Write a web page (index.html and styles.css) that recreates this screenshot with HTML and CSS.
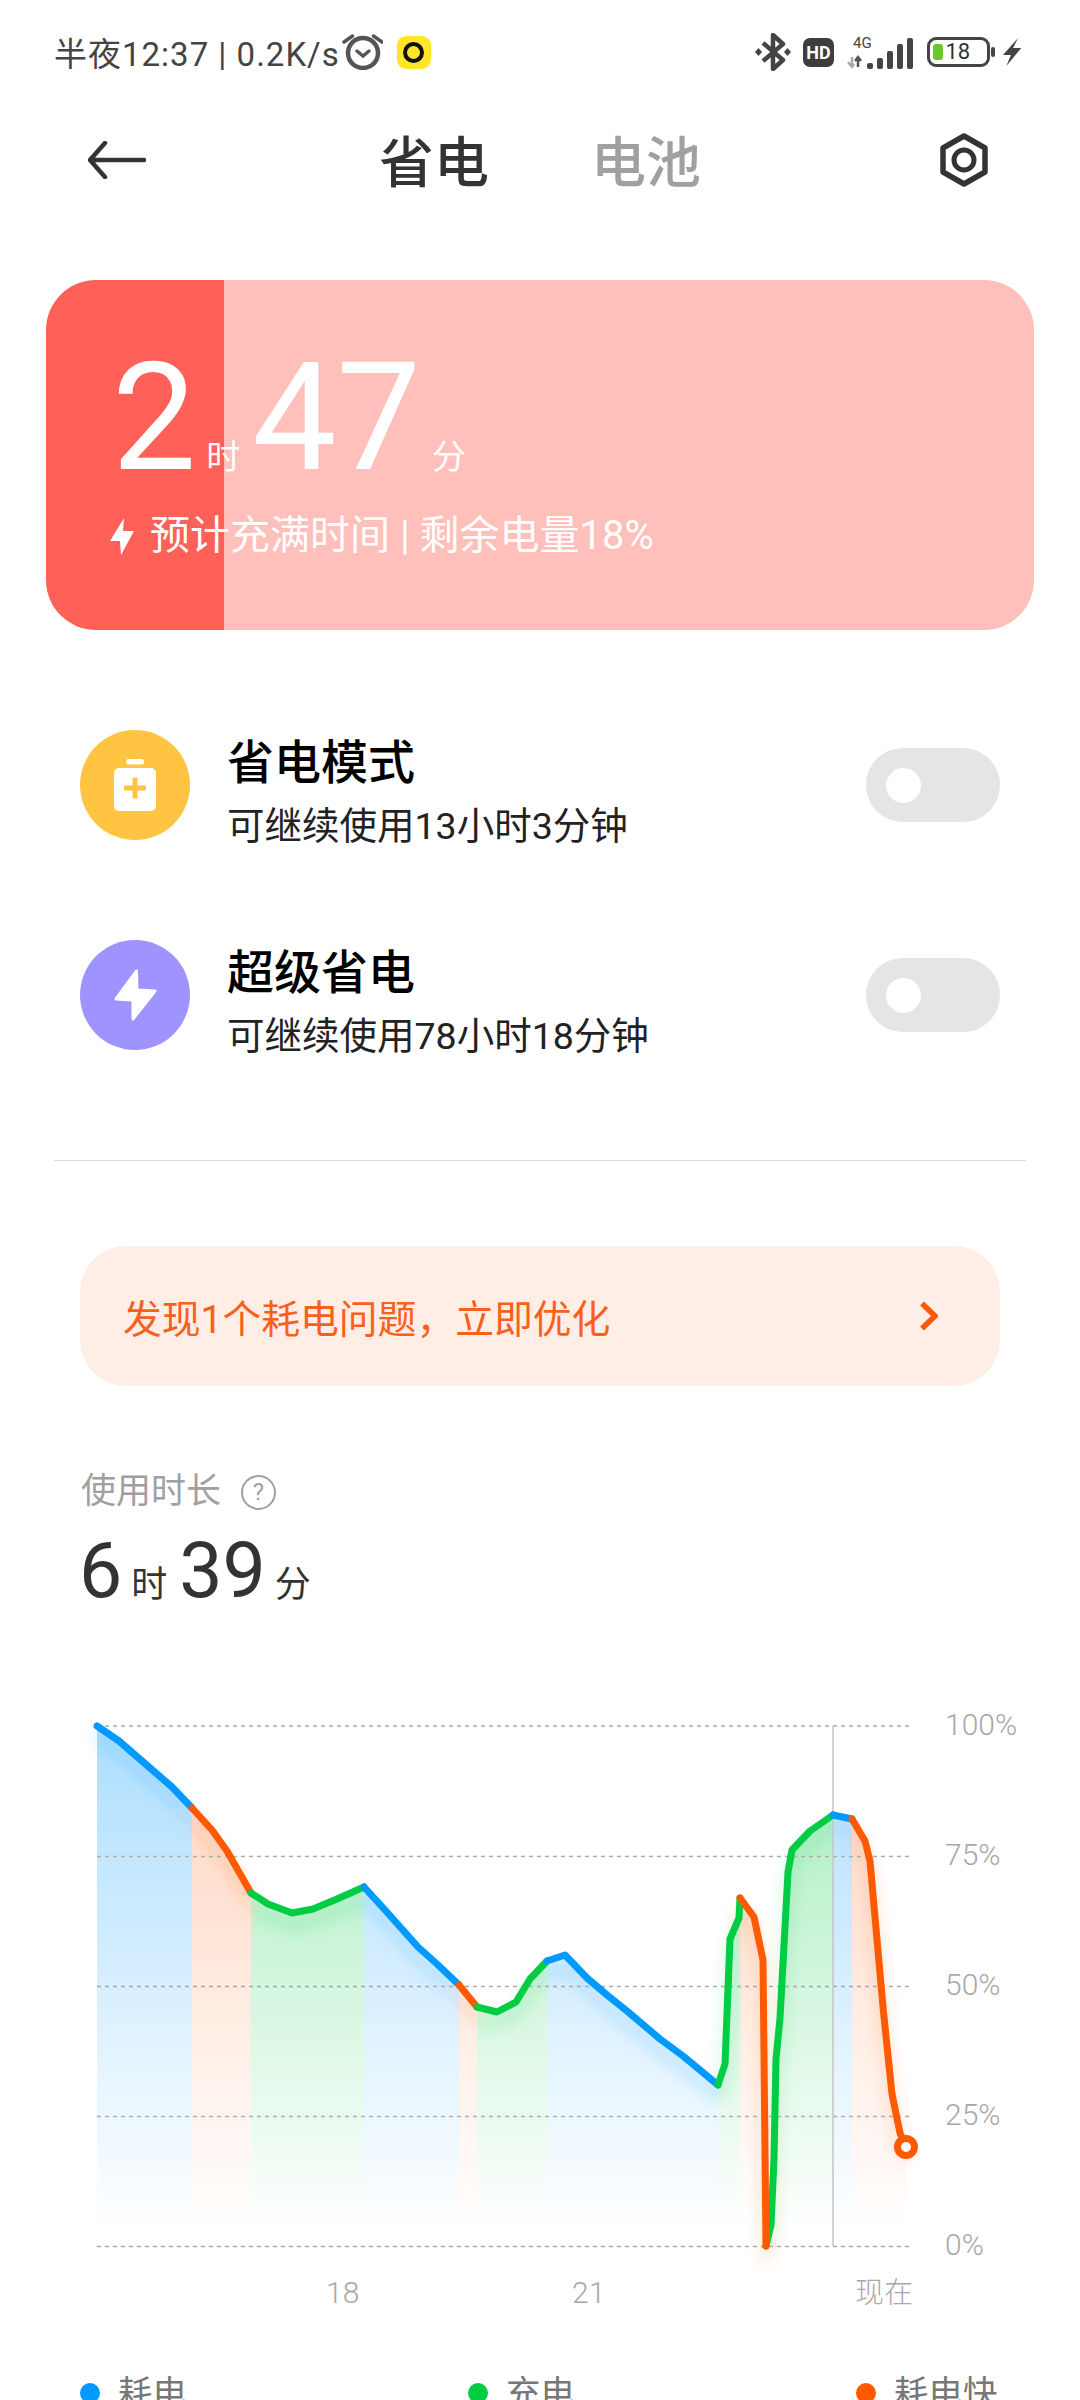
FILE: index.html
```html
<!DOCTYPE html>
<html lang="zh-CN">
<head>
  <meta charset="UTF-8">
  <meta name="viewport" content="width=device-width, initial-scale=1.0">
  <title>省电</title>
  <link rel="stylesheet" href="styles.css">
</head>
<body>

<!-- status bar -->
<div class="status">
  <span class="status-text">半夜12:37 | 0.2K/s</span>
  <svg class="alarm" viewBox="0 0 41 36" width="41" height="36">
    <circle cx="21" cy="19" r="15" fill="none" stroke="#555" stroke-width="4.5"/>
    <path d="M15 17l6 5 6-5" fill="none" stroke="#555" stroke-width="3.5" stroke-linecap="round"/>
    <path d="M2 8L10.5 2M40 8L31.5 2" fill="none" stroke="#555" stroke-width="3.5" stroke-linecap="round"/>
  </svg>
  <span class="app-tile"><span class="app-ring"></span></span>
  <div class="status-right">
    <svg viewBox="0 0 36 38" width="36" height="38">
      <path d="M8 10l20 17-10 9V2l10 9L8 28" fill="none" stroke="#444" stroke-width="4.5" stroke-linejoin="round"/>
      <path d="M3.5 15L7 19l-3.5 4L0 19zM32.5 15l3.5 4-3.5 4-3.5-4z" fill="#444"/>
    </svg>
    <span class="hd">HD</span>
    <svg viewBox="0 0 66 35" width="66" height="35">
      <text class="net" x="6" y="13">4G</text>
      <path d="M5 22v10M1 27l4 5 2-3" fill="none" stroke="#aaa" stroke-width="2.5"/>
      <path d="M11 32V22M8 26l3-4 3 4" fill="none" stroke="#555" stroke-width="2.5"/>
      <rect x="20" y="28" width="6" height="6" rx="2" fill="#444"/>
      <rect x="30" y="23" width="6" height="11" rx="2" fill="#444"/>
      <rect x="40" y="16" width="6" height="18" rx="2" fill="#444"/>
      <rect x="50" y="9" width="6" height="25" rx="2" fill="#444"/>
      <rect x="60" y="3" width="6" height="31" rx="2" fill="#444"/>
    </svg>
    <div class="battery">
      <div class="battery-body">
        <span class="battery-level"></span>
        <span class="battery-num">18</span>
      </div>
      <span class="battery-tip"></span>
    </div>
    <svg class="status-bolt" viewBox="0 0 19 28" width="19" height="28">
      <path d="M15 0L0 17h8L3.3 28 18.3 10H10z" fill="#444"/>
    </svg>
  </div>
</div>

<!-- nav -->
<div class="nav">
  <svg viewBox="0 0 58 38" width="58" height="38">
    <path d="M17 2L2 19l15 17M2 19h54" fill="none" stroke="#333" stroke-width="4.5" stroke-linecap="round" stroke-linejoin="round"/>
  </svg>
  <div class="tabs">
    <span class="tab tab-active">省电</span>
    <span class="tab">电池</span>
  </div>
  <svg viewBox="0 0 52 54" width="52" height="54">
    <path d="M26 3l21 12v24L26 51 5 39V15z" fill="none" stroke="#333" stroke-width="5.5" stroke-linejoin="round"/>
    <circle cx="26" cy="27" r="10" fill="none" stroke="#333" stroke-width="5"/>
  </svg>
</div>

<!-- charge card -->
<div class="card">
  <div class="card-time">
    <span class="card-num">2</span><span class="card-unit">时</span>
    <span class="card-num">47</span><span class="card-unit card-unit-last">分</span>
  </div>
  <div class="card-info">
    <svg viewBox="0 0 24 37" width="24" height="37">
      <path d="M14 0L0 23h10L11 37 24 13H13z" fill="#fff"/>
    </svg>
    <span>预计充满时间 | 剩余电量18%</span>
  </div>
</div>

<!-- modes -->
<div class="mode">
  <span class="mode-icon mode-icon-yellow">
    <svg viewBox="0 0 42 52" width="42" height="52">
      <rect x="12" y="0" width="18" height="5.5" rx="2.75" fill="#fff"/>
      <rect x="0" y="9" width="42" height="43" rx="5" fill="#fff"/>
      <path d="M21 18.5v21M10 29h22" stroke="#ffc542" stroke-width="5"/>
    </svg>
  </span>
  <div class="mode-text">
    <div class="mode-title">省电模式</div>
    <div class="mode-sub">可继续使用13小时3分钟</div>
  </div>
  <span class="toggle"><span class="knob"></span></span>
</div>
<div class="mode">
  <span class="mode-icon mode-icon-purple">
    <svg viewBox="0 0 43 52" width="43" height="52">
      <path d="M22.5 2L2 30l17 1v19L41 22l-18-1z" fill="#fff" stroke="#fff" stroke-width="3" stroke-linejoin="round"/>
    </svg>
  </span>
  <div class="mode-text">
    <div class="mode-title">超级省电</div>
    <div class="mode-sub">可继续使用78小时18分钟</div>
  </div>
  <span class="toggle"><span class="knob"></span></span>
</div>

<hr class="divider">

<!-- alert -->
<div class="alert">
  <span>发现1个耗电问题，立即优化</span>
  <svg viewBox="0 0 19 30" width="19" height="30">
    <path d="M3 2.5L16 15 3 27.5" fill="none" stroke="#fb5a0a" stroke-width="5.5"/>
  </svg>
</div>

<!-- usage -->
<div class="usage">
  <div class="usage-label">
    <span>使用时长</span>
    <span class="help">?</span>
  </div>
  <div class="usage-time">
    <span class="usage-num">6</span><span class="usage-unit">时</span>
    <span class="usage-num">39</span><span class="usage-unit">分</span>
  </div>
</div>

<!-- chart, coordinates are page pixels -->
<svg class="chart" viewBox="0 1700 1080 640" width="1080" height="640">
  <defs>
    <linearGradient id="fade-blue" gradientUnits="userSpaceOnUse" x1="0" y1="1726" x2="0" y2="2232">
      <stop offset="0" stop-color="#0099ff" stop-opacity=".32"/>
      <stop offset="1" stop-color="#0099ff" stop-opacity="0"/>
    </linearGradient>
    <linearGradient id="fade-green" gradientUnits="userSpaceOnUse" x1="0" y1="1726" x2="0" y2="2232">
      <stop offset="0" stop-color="#00cc44" stop-opacity=".36"/>
      <stop offset="1" stop-color="#00cc44" stop-opacity="0"/>
    </linearGradient>
    <linearGradient id="fade-orange" gradientUnits="userSpaceOnUse" x1="0" y1="1726" x2="0" y2="2232">
      <stop offset="0" stop-color="#ff5a00" stop-opacity=".26"/>
      <stop offset="1" stop-color="#ff5a00" stop-opacity="0"/>
    </linearGradient>
    <filter id="soft" filterUnits="userSpaceOnUse" x="0" y="1700" width="1080" height="640">
      <feGaussianBlur stdDeviation="8"/>
    </filter>
    <g id="lines">
      <polyline class="line line-blue" points="97,1726 119,1741 142,1761 172,1787 192,1808"/>
      <polyline class="line line-orange" points="192,1808 212,1830 227,1851 251,1893"/>
      <polyline class="line line-green" points="251,1893 268,1904 292,1913 313,1909 337,1899 364,1887"/>
      <polyline class="line line-blue" points="364,1887 385,1910 418,1947 437,1964 459,1985"/>
      <polyline class="line line-orange" points="459,1985 477,2007"/>
      <polyline class="line line-green" points="477,2007 497,2012 516,2002 530,1979 547,1961"/>
      <polyline class="line line-blue" points="547,1961 565,1955 587,1978 607,1995 627,2011 660,2039 683,2056 718,2085"/>
      <polyline class="line line-green" points="718,2085 725,2064 730,1939 739,1918 740,1898"/>
      <polyline class="line line-green" points="766,2246 771,2225 774,2159 776,2059 780,2018 788,1872 792,1850 810,1831 833,1815"/>
      <polyline class="line line-orange" points="740,1898 754,1917 763,1960 766,2246"/>
      <polyline class="line line-blue" points="833,1815 852,1819"/>
      <polyline class="line line-orange" points="852,1819 865,1841 870,1861 883,2007 892,2094 900,2133 906,2147"/>
    </g>
  </defs>

  <polygon fill="url(#fade-blue)" points="97,1726 119,1741 142,1761 172,1787 192,1808 192,2246 97,2246"/>
  <polygon fill="url(#fade-orange)" points="192,1808 212,1830 227,1851 251,1893 251,2246 192,2246"/>
  <polygon fill="url(#fade-green)" points="251,1893 268,1904 292,1913 313,1909 337,1899 364,1887 364,2246 251,2246"/>
  <polygon fill="url(#fade-blue)" points="364,1887 385,1910 418,1947 437,1964 459,1985 459,2246 364,2246"/>
  <polygon fill="url(#fade-orange)" points="459,1985 477,2007 477,2246 459,2246"/>
  <polygon fill="url(#fade-green)" points="477,2007 497,2012 516,2002 530,1979 547,1961 547,2246 477,2246"/>
  <polygon fill="url(#fade-blue)" points="547,1961 565,1955 587,1978 607,1995 627,2011 660,2039 683,2056 718,2085 718,2246 547,2246"/>
  <polygon fill="url(#fade-green)" points="718,2085 725,2064 730,1939 739,1918 740,1898 740,2246 718,2246"/>
  <polygon fill="url(#fade-orange)" points="740,1898 754,1917 763,1960 766,2246 740,2246"/>
  <polygon fill="url(#fade-green)" points="766,2246 771,2225 774,2159 776,2059 780,2018 788,1872 792,1850 810,1831 833,1815 833,2246"/>
  <polygon fill="url(#fade-blue)" points="833,1815 852,1819 852,2246 833,2246"/>
  <polygon fill="url(#fade-orange)" points="852,1819 865,1841 870,1861 883,2007 892,2094 900,2133 906,2147 906,2246 852,2246"/>

  <use class="glow" href="#lines" transform="translate(0 12)" filter="url(#soft)"/>

  <path class="grid" d="M97 1726H913M97 1856.5H913M97 1986.5H913M97 2116.5H913M97 2246.5H913"/>
  <path class="now" d="M833 1726V2246"/>

  <use href="#lines"/>
  <circle class="dot-end" cx="906" cy="2147" r="8.5"/>

  <text class="axis" x="945" y="1735">100%</text>
  <text class="axis" x="945" y="1865">75%</text>
  <text class="axis" x="945" y="1995">50%</text>
  <text class="axis" x="945" y="2125">25%</text>
  <text class="axis" x="945" y="2255">0%</text>
  <text class="axis" x="326" y="2303">18</text>
  <text class="axis" x="572" y="2303">21</text>
  <text class="axis axis-cn" x="855" y="2303">现在</text>
</svg>

<div class="legend">
  <span class="legend-item"><span class="legend-dot dot-blue"></span>耗电</span>
  <span class="legend-item"><span class="legend-dot dot-green"></span>充电</span>
  <span class="legend-item"><span class="legend-dot dot-orange"></span>耗电快</span>
</div>

</body>
</html>
```

FILE: styles.css
```css
* {
  margin: 0;
  padding: 0;
  box-sizing: border-box;
}
html, body {
  width: 1080px;
  height: 2400px;
  overflow: hidden;
}
body {
  font-family: Roboto, "Noto Sans CJK SC", sans-serif;
  background: #fff;
  color: #000;
}
svg {
  display: block;
  flex: none;
}

/* status bar */
.status {
  display: flex;
  align-items: center;
  height: 104px;
  padding: 0 58px 0 54px;
}
.status-text {
  font-size: 33px;
  letter-spacing: 1px;
  color: #444;
  white-space: nowrap;
}
.alarm {
  margin-left: 2px;
}
.app-tile {
  display: flex;
  align-items: center;
  justify-content: center;
  width: 34px;
  height: 33px;
  margin-left: 14px;
  border-radius: 9px;
  background: #ffe628;
}
.app-ring {
  width: 21px;
  height: 21px;
  border: 4px solid #111;
  border-radius: 50%;
}
.status-right {
  display: flex;
  align-items: center;
  gap: 13px;
  margin-left: auto;
}
.hd {
  width: 31px;
  height: 29px;
  margin-left: -1px;
  border-radius: 7px;
  background: #3d3d3d;
  color: #fff;
  font-size: 18px;
  font-weight: 700;
  line-height: 29px;
  text-align: center;
}
.net {
  font-family: Roboto, sans-serif;
  font-size: 15px;
  fill: #444;
}
.battery {
  display: flex;
  align-items: center;
  gap: 1px;
  margin-left: 1px;
}
.battery-body {
  display: flex;
  align-items: center;
  gap: 3px;
  width: 63px;
  height: 30px;
  padding-left: 2.5px;
  border: 3.5px solid #444;
  border-radius: 9px;
}
.battery-level {
  width: 10px;
  height: 16px;
  border-radius: 3px;
  background: #6cc72c;
}
.battery-num {
  font-size: 22px;
  line-height: 1;
  color: #333;
}
.battery-tip {
  width: 4px;
  height: 10px;
  border-radius: 2px;
  background: #444;
}
.status-bolt {
  margin-left: -5px;
}

/* nav */
.nav {
  display: flex;
  align-items: center;
  justify-content: space-between;
  height: 112px;
  padding: 0 90px 0 88px;
}
.tabs {
  display: flex;
  gap: 102px;
  margin: 6px 4px 0 0;
}
.tab {
  font-size: 55px;
  font-weight: 500;
  line-height: 60px;
  color: #a0a0a0;
}
.tab-active {
  color: #333;
}

/* charge card */
.card {
  height: 350px;
  margin: 64px 46px 0;
  padding: 53px 0 0 66px;
  border-radius: 50px;
  background: linear-gradient(90deg, #ff6058 178px, #ffbfba 178px);
  color: #fff;
}
.card-time {
  display: flex;
  align-items: baseline;
  height: 170px;
}
.card-num {
  font-size: 150px;
  line-height: 170px;
}
.card-unit {
  margin: 0 12px 0 10px;
  font-size: 34px;
}
.card-unit-last {
  margin-left: 11px;
}
.card-info {
  display: flex;
  align-items: center;
  gap: 16px;
  margin: 11px 0 0 -2px;
  font-size: 40px;
  line-height: 44px;
}

/* modes */
.mode {
  display: flex;
  align-items: center;
  height: 210px;
  padding: 0 80px;
}
.card + .mode {
  margin-top: 50px;
}
.mode-icon {
  display: flex;
  align-items: center;
  justify-content: center;
  width: 110px;
  height: 110px;
  border-radius: 50%;
}
.mode-icon-yellow {
  background: #ffc542;
}
.mode-icon-purple {
  background: #9f94ff;
}
.mode-text {
  flex: 1;
  margin: 14px 0 0 37px;
}
.mode-title {
  font-size: 47px;
  font-weight: 500;
  line-height: 60px;
}
.mode-sub {
  margin-top: 8px;
  font-size: 37.5px;
  line-height: 50px;
  color: #222;
}
.toggle {
  display: flex;
  align-items: center;
  width: 134px;
  height: 74px;
  padding-left: 20px;
  border-radius: 37px;
  background: #e5e5e5;
}
.knob {
  width: 35px;
  height: 35px;
  border-radius: 50%;
  background: #fff;
}

.divider {
  height: 1px;
  margin: 60px 54px 0;
  border: none;
  background: #dcdcdc;
}

/* alert */
.alert {
  display: flex;
  align-items: center;
  justify-content: space-between;
  height: 140px;
  margin: 85px 80px 0;
  padding: 0 62px 0 43px;
  border-radius: 46px;
  background: #ffeee6;
  color: #f9601b;
  font-size: 38.8px;
}

/* usage */
.usage {
  height: 314px;
  padding: 86px 0 0 79px;
}
.usage-label {
  display: flex;
  align-items: center;
  gap: 20px;
  margin-left: 2px;
  font-size: 35px;
  line-height: 40px;
  color: #a0a0a0;
}
.help {
  width: 35px;
  height: 35px;
  border: 2.5px solid #a0a0a0;
  border-radius: 50%;
  font-size: 24px;
  line-height: 30px;
  text-align: center;
}
.usage-time {
  display: flex;
  align-items: baseline;
  margin-top: 14px;
  color: #333;
}
.usage-num {
  font-size: 77px;
  line-height: 90px;
}
.usage-unit {
  margin: 0 12px 0 9px;
  font-size: 36px;
}

/* chart */
.line {
  fill: none;
  stroke-width: 7;
  stroke-linecap: round;
  stroke-linejoin: round;
}
.line-blue {
  stroke: #0099ff;
}
.line-green {
  stroke: #00cc44;
}
.line-orange {
  stroke: #ff5a00;
}
.glow {
  opacity: .26;
}
.grid {
  fill: none;
  stroke: #aaa;
  stroke-width: 1.5;
  stroke-dasharray: 4 4;
}
.now {
  stroke: #c4c4c4;
  stroke-width: 1.5;
}
.dot-end {
  fill: #fff;
  stroke: #ff5a00;
  stroke-width: 7;
}
.axis {
  font-size: 30px;
  font-weight: 300;
  fill: #a8a8a8;
}
.axis-cn {
  font-size: 29px;
}

/* legend */
.legend {
  display: grid;
  grid-template-columns: 388px 388px 1fr;
  margin-top: 31px;
  padding-left: 80px;
}
.legend-item {
  display: flex;
  align-items: center;
  gap: 18px;
  font-size: 34.5px;
  line-height: 44px;
  color: #777;
}
.legend-dot {
  width: 20px;
  height: 20px;
  border-radius: 50%;
}
.dot-blue {
  background: #0099ff;
}
.dot-green {
  background: #00cc44;
}
.dot-orange {
  background: #ff5a00;
}
```
